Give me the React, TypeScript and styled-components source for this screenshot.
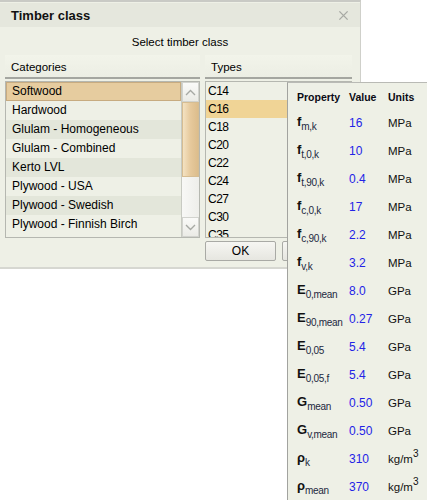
import React, { useState } from "react";
import styled, { createGlobalStyle } from "styled-components";

const GlobalStyle = createGlobalStyle`
  html, body {
    margin: 0;
    padding: 0;
    background: #ffffff;
  }
  body {
    font-family: Tahoma, "Liberation Sans", Arial, sans-serif;
    font-size: 11.5px;
    color: #000;
  }
`;

const categories = [
  "Softwood",
  "Hardwood",
  "Glulam - Homogeneous",
  "Glulam - Combined",
  "Kerto LVL",
  "Plywood - USA",
  "Plywood - Swedish",
  "Plywood - Finnish Birch",
];

const types = ["C14", "C16", "C18", "C20", "C22", "C24", "C27", "C30", "C35"];

// property rows shown in the tooltip
const properties: { sym: string; sub: string; value: string; unit: string; cube?: boolean }[] = [
  { sym: "f", sub: "m,k", value: "16", unit: "MPa" },
  { sym: "f", sub: "t,0,k", value: "10", unit: "MPa" },
  { sym: "f", sub: "t,90,k", value: "0.4", unit: "MPa" },
  { sym: "f", sub: "c,0,k", value: "17", unit: "MPa" },
  { sym: "f", sub: "c,90,k", value: "2.2", unit: "MPa" },
  { sym: "f", sub: "v,k", value: "3.2", unit: "MPa" },
  { sym: "E", sub: "0,mean", value: "8.0", unit: "GPa" },
  { sym: "E", sub: "90,mean", value: "0.27", unit: "GPa" },
  { sym: "E", sub: "0,05", value: "5.4", unit: "GPa" },
  { sym: "E", sub: "0,05,f", value: "5.4", unit: "GPa" },
  { sym: "G", sub: "mean", value: "0.50", unit: "GPa" },
  { sym: "G", sub: "v,mean", value: "0.50", unit: "GPa" },
  { sym: "ρ", sub: "k", value: "310", unit: "kg/m", cube: true },
  { sym: "ρ", sub: "mean", value: "370", unit: "kg/m", cube: true },
];

const App: React.FC = () => {
  // selected category and type
  const [category, setCategory] = useState<number>(0);
  const [type, setType] = useState<number>(1);

  return (
    <>
      <GlobalStyle />
      <Page>
        <Dialog>
          <TitleBar>
            <Title>Timber class</Title>
            <CloseIcon viewBox="0 0 12 12">
              <path d="M1.5 1.5 L10.5 10.5 M10.5 1.5 L1.5 10.5" />
            </CloseIcon>
          </TitleBar>
          <Subtitle>Select timber class</Subtitle>
          <Columns>
            <Column>
              <Header>Categories</Header>
              <ListBox>
                <Items>
                  {categories.map((c, i) => (
                    <CategoryItem
                      key={c}
                      $odd={i % 2 === 0}
                      $selected={i === category}
                      onClick={() => setCategory(i)}
                    >
                      {c}
                    </CategoryItem>
                  ))}
                </Items>
                <ScrollBar>
                  <ScrollButton>
                    <svg width="11" height="7" viewBox="0 0 11 7">
                      <path d="M1 6 L5.5 1.5 L10 6" />
                    </svg>
                  </ScrollButton>
                  <Thumb />
                  <Track />
                  <ScrollButton>
                    <svg width="11" height="7" viewBox="0 0 11 7">
                      <path d="M1 1 L5.5 5.5 L10 1" />
                    </svg>
                  </ScrollButton>
                </ScrollBar>
              </ListBox>
            </Column>
            <Column>
              <Header>Types</Header>
              <TypeBox>
                {types.map((t, i) => (
                  <TypeItem key={t} $selected={i === type} onClick={() => setType(i)}>
                    {t}
                  </TypeItem>
                ))}
              </TypeBox>
              <Buttons>
                <Button>OK</Button>
                <Button>Cancel</Button>
              </Buttons>
            </Column>
          </Columns>
        </Dialog>

        <Tooltip>
          <PropTable>
            <HeadCell>Property</HeadCell>
            <HeadCell>Value</HeadCell>
            <HeadCell>Units</HeadCell>
            {properties.map((p) => (
              <React.Fragment key={p.sym + p.sub}>
                <SymbolCell>
                  <Sym>{p.sym}</Sym>
                  <Sub>{p.sub}</Sub>
                </SymbolCell>
                <ValueCell>{p.value}</ValueCell>
                <UnitCell>
                  {p.unit}
                  {p.cube && <Sup>3</Sup>}
                </UnitCell>
              </React.Fragment>
            ))}
          </PropTable>
        </Tooltip>
      </Page>
    </>
  );
};

export default App;

// Styled Components
const Page = styled.div`
  position: relative;
  width: 427px;
  height: 500px;
  overflow: hidden;
`;

const Dialog = styled.div`
  width: 360px;
  height: 265px;
  background: #eef0e6;
  border-top: 2px solid #c9cac5;
  border-right: 1px solid #cfd0ca;
  border-bottom: 2px solid #d6d7d1;
  display: flex;
  flex-direction: column;
`;

const TitleBar = styled.div`
  margin-top: 1px;
  height: 24px;
  background: #e5e7dd;
  display: flex;
  align-items: center;
  justify-content: space-between;
  padding: 0 11px;
`;

const Title = styled.span`
  font-weight: bold;
  font-size: 13px;
  color: #111;
`;

const CloseIcon = styled.svg`
  width: 11px;
  height: 11px;
  fill: none;
  stroke: #a8aaa4;
  stroke-width: 1.5;
`;

const Subtitle = styled.div`
  height: 28px;
  line-height: 30px;
  text-align: center;
`;

const Columns = styled.div`
  display: grid;
  grid-template-columns: 195px 147px;
  column-gap: 5px;
  padding-left: 5px;
`;

const Column = styled.div`
  display: flex;
  flex-direction: column;
`;

const Header = styled.div`
  height: 22px;
  line-height: 24px;
  padding-left: 6px;
  background: linear-gradient(#f2f4ea, #eceee4);
  border-bottom: 2px solid #a4a6a0;
`;

const ListBox = styled.div`
  margin-top: 2px;
  height: 155px;
  border: 1px solid #b5b7b0;
  display: flex;
  background: #eef0e6;
`;

const Items = styled.div`
  flex: 1;
  display: flex;
  flex-direction: column;
`;

const CategoryItem = styled.div<{ $odd: boolean; $selected: boolean }>`
  height: 19px;
  box-sizing: border-box;
  padding-left: ${(p) => (p.$selected ? "5px" : "6px")};
  line-height: ${(p) => (p.$selected ? "17px" : "19px")};
  font-size: 12px;
  background: ${(p) => (p.$selected ? "#e6cc9f" : p.$odd ? "#e3e6da" : "#eef0e6")};
  border: ${(p) => (p.$selected ? "1px solid #c7ab80" : "none")};
  cursor: default;
`;

const ScrollBar = styled.div`
  width: 17px;
  display: flex;
  flex-direction: column;
  border-left: 1px solid #c8cac2;
  background: #f2f2ee;
`;

const ScrollButton = styled.div`
  height: 20px;
  display: flex;
  align-items: center;
  justify-content: center;
  background: linear-gradient(#fafaf8, #ebebe6);
  border: 1px solid #d2d3ce;
  box-sizing: border-box;

  svg {
    fill: none;
    stroke: #a7a9a4;
    stroke-width: 1.4;
  }
`;

const Thumb = styled.div`
  height: 75px;
  background: linear-gradient(to right, #f4e2c2, #e6c99c 50%, #dcbd8c);
  border: 1px solid #d6bd92;
  box-sizing: border-box;
`;

const Track = styled.div`
  flex: 1;
  background: linear-gradient(to right, #f8f8f6, #eeeeea);
`;

const TypeBox = styled.div`
  margin-top: 2px;
  height: 155px;
  border: 1px solid #b5b7b0;
  overflow: hidden;
  display: flex;
  flex-direction: column;
  background: #eef0e6;
`;

const TypeItem = styled.div<{ $selected: boolean }>`
  flex: none;
  height: 18px;
  line-height: 18px;
  padding-left: 2px;
  font-size: 12px;
  letter-spacing: -0.5px;
  background: ${(p) => (p.$selected ? "#f0d496" : "transparent")};
  cursor: default;
`;

const Buttons = styled.div`
  display: flex;
  gap: 6px;
  margin-top: 3px;
`;

const Button = styled.button`
  flex: none;
  width: 71px;
  height: 20px;
  padding: 0;
  font-family: inherit;
  font-size: 12px;
  color: #000;
  background: linear-gradient(#f6f6f2, #e6e6e0);
  border: 1px solid #a9aaa5;
  border-radius: 2px;
`;

const Tooltip = styled.div`
  position: absolute;
  left: 287px;
  top: 82px;
  width: 137px;
  height: 415px;
  background: #eef0e6;
  border: 1px solid #8e8f8b;
  border-top-color: #b9bab5;
  border-left-color: #a2a39f;
  border-bottom: 2px solid #6c6d69;
  border-right: 2px solid #6c6d69;
  padding: 2px 0 0 9px;
`;

const PropTable = styled.div`
  display: grid;
  grid-template-columns: 52px 39px 1fr;
  grid-template-rows: 24px repeat(14, 28px);
  align-items: center;
  font-family: Tahoma, "Liberation Sans", Arial, sans-serif;
  font-size: 11px;
`;

const HeadCell = styled.div`
  font-weight: bold;
  font-size: 10.5px;
  color: #0a0a14;
`;

const SymbolCell = styled.div`
  white-space: nowrap;
  line-height: 14px;
  height: 16px;
`;

const Sym = styled.span`
  font-weight: bold;
  font-size: 13px;
  color: #111;
`;

const Sub = styled.span`
  font-size: 10px;
  color: #1c2840;
  position: relative;
  top: 4px;
  letter-spacing: -0.3px;
`;

const ValueCell = styled.div`
  color: #2323e6;
  font-size: 12px;
`;

const UnitCell = styled.div`
  font-size: 11.5px;
  color: #111;
  white-space: nowrap;
`;

const Sup = styled.span`
  font-size: 10px;
  position: relative;
  top: -6px;
`;
